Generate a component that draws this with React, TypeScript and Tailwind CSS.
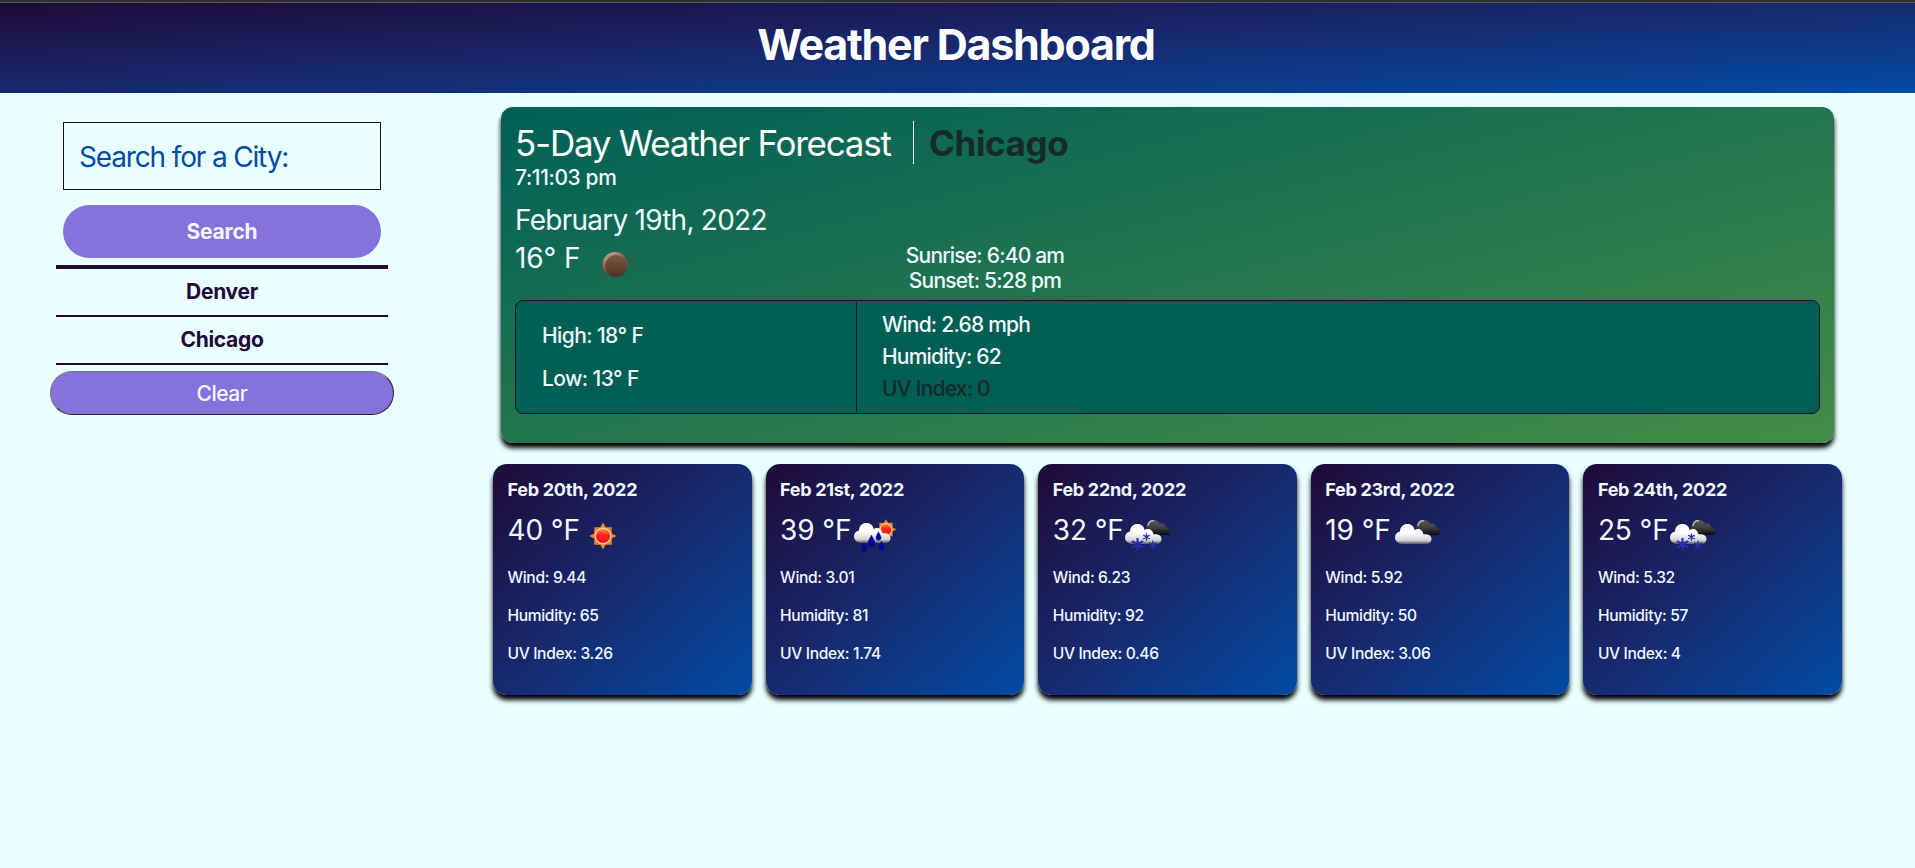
type Kind = "sun" | "rain" | "snow" | "cloud";

const days: { date: string; temp: string; kind: Kind; wind: string; humidity: string; uv: string }[] = [
  { date: "Feb 20th, 2022", temp: "40", kind: "sun", wind: "9.44", humidity: "65", uv: "3.26" },
  { date: "Feb 21st, 2022", temp: "39", kind: "rain", wind: "3.01", humidity: "81", uv: "1.74" },
  { date: "Feb 22nd, 2022", temp: "32", kind: "snow", wind: "6.23", humidity: "92", uv: "0.46" },
  { date: "Feb 23rd, 2022", temp: "19", kind: "cloud", wind: "5.92", humidity: "50", uv: "3.06" },
  { date: "Feb 24th, 2022", temp: "25", kind: "snow", wind: "5.32", humidity: "57", uv: "4" },
];

const iconMargin: Record<Kind, string> = {
  sun: "ml-[9px]",
  rain: "ml-[2px]",
  snow: "ml-0",
  cloud: "ml-[3px]",
};

const CLOUD = "M8 22 C3 22 0 19 0 15.5 C0 12 2 10 5 9.5 C5 4.5 8.500 2 12.500 2 C16.500 2 19 4.500 19.500 8 C23 5.500 28 7.500 28.500 12.500 C33.500 11.500 36.500 14 36.500 17 C36.500 20 34 22 31 22 Z";

function SunShape() {
  return (
    <g>
      <path
        d="M0 -14 L2.800 -9 L9 -9 L9 -2.800 L14 0 L9 2.800 L9 9 L2.800 9 L0 14 L-2.800 9 L-9 9 L-9 2.800 L-14 0 L-9 -2.800 L-9 -9 L-2.800 -9 Z"
        fill="#e8872a"
      />
      <circle r="8" fill="url(#sunCore)" stroke="#ffc9a0" strokeWidth="1.400" />
    </g>
  );
}

function Flake({ x, y, r }: { x: number; y: number; r: number }) {
  return (
    <g transform={`translate(${x} ${y}) scale(${r})`} stroke="#2531ac" strokeWidth="0.320" strokeLinecap="round">
      <path d="M0 -0.850 V0.850 M-0.750 -0.430 L0.750 0.430 M-0.750 0.430 L0.750 -0.430" />
      <circle r="0.400" fill="#2531ac" stroke="none" />
    </g>
  );
}

function Drop({ x, y, s }: { x: number; y: number; s: number }) {
  return (
    <path
      transform={`translate(${x} ${y}) scale(${s})`}
      d="M0 -5.500 C1 -3 3 -1 3 1.500 C3 3.500 1.600 4.500 0 4.500 C-1.600 4.500 -3 3.500 -3 1.500 C-3 -1 -1 -3 0 -5.500 Z"
      fill="#0606a8"
      stroke="#06064a"
      strokeWidth="0.500"
    />
  );
}

function WeatherIcon({ kind }: { kind: Kind }) {
  return (
    <svg className={`block h-[36px] w-[48px] shrink-0 ${iconMargin[kind]}`} viewBox="0 0 48 36">
      <defs>
        <linearGradient id="cloudFill" x1="0" y1="0" x2="0" y2="1">
          <stop offset="0.450" stopColor="#ffffff" />
          <stop offset="0.820" stopColor="#d2d2d6" />
          <stop offset="1" stopColor="#55565e" />
        </linearGradient>
        <linearGradient id="darkCloud" x1="0" y1="0" x2="0" y2="1">
          <stop offset="0" stopColor="#5a5a5c" />
          <stop offset="0.550" stopColor="#3c3c3e" />
          <stop offset="1" stopColor="#08080c" />
        </linearGradient>
        <linearGradient id="sunCore" x1="0" y1="0" x2="0" y2="1">
          <stop offset="0" stopColor="#ff9a38" />
          <stop offset="0.450" stopColor="#ff2418" />
          <stop offset="1" stopColor="#ff0a22" />
        </linearGradient>
      </defs>
      {kind === "sun" && (
        <g transform="translate(14 19) scale(0.970)">
          <SunShape />
        </g>
      )}
      {kind === "rain" && (
        <>
          <g transform="translate(33 12.500) scale(0.740)">
            <SunShape />
          </g>
          <path transform="translate(1 4)" d={CLOUD} fill="url(#cloudFill)" />
          <Drop x={11} y={30.500} s={0.9} />
          <Drop x={18.500} y={24.500} s={1.150} />
          <Drop x={25.500} y={19.500} s={0.850} />
          <Drop x={28.500} y={29} s={0.900} />
        </>
      )}
      {(kind === "snow" || kind === "cloud") && (
        <>
          <path d="M23 14 C21 7 24 2 29 2 C33 2 35.500 4 36 6 C38 4.500 41.500 5.500 42 9.500 C44 9 45.500 10.500 45.500 12.500 V17 H33 Z" transform="translate(0 1)" fill="url(#darkCloud)" />
          <path d="M24 9 C24.500 5 27 3.500 30 3.800" fill="none" stroke="#b9b9bb" strokeWidth="1.400" />
          <path transform="translate(1 5)" d={CLOUD} fill="url(#cloudFill)" />
        </>
      )}
      {kind === "snow" && (
        <>
          <Flake x={13.500} y={27.300} r={6.500} />
          <Flake x={22.500} y={20} r={3.800} />
          <Flake x={29} y={28} r={4.500} />
        </>
      )}
    </svg>
  );
}

function MoonIcon() {
  return (
    <svg className="block h-[28px] w-[36px]" viewBox="0 0 36 28">
      <defs>
        <linearGradient id="moonFill" x1="0" y1="0" x2="0" y2="1">
          <stop offset="0" stopColor="#7d5a43" />
          <stop offset="1" stopColor="#4d3023" />
        </linearGradient>
        <linearGradient id="moonRim" x1="0" y1="0" x2="0.500" y2="1">
          <stop offset="0" stopColor="#d9b8a6" />
          <stop offset="0.500" stopColor="#8a6249" />
          <stop offset="1" stopColor="#5b3826" />
        </linearGradient>
      </defs>
      <circle cx="14" cy="13.500" r="12.500" fill="url(#moonRim)" />
      <circle cx="15.200" cy="15" r="11" fill="url(#moonFill)" />
      <path d="M30 2 L31 4 L33 4.200 L31.500 5.600 L32 7.600 L30 6.600 L28 7.600 L28.500 5.600 L27 4.200 L29 4 Z M32 10 L32.800 11.800 L34.500 12 L33.200 13.200 L33.600 15 L32 14 L30.400 15 L30.800 13.200 L29.500 12 L31.200 11.800 Z" fill="#6b4a38" />
    </svg>
  );
}

export default function App() {
  return (
    <div className="h-[868px] w-[1915px] overflow-hidden bg-[#eaffff] font-['Inter',sans-serif] font-[450] text-[#f0f8ff]">
      <div className="h-[3px] border-b border-[#57585a] bg-[#2e2f31]" />
      <header className="flex h-[90px] justify-center bg-[linear-gradient(to_bottom_right,#1f0a38,#172a6f,#024ba4)]">
        <h1 className="h-[84px] pr-[3px] text-[43px] leading-[83px] font-bold tracking-[-1.25px] text-white">Weather Dashboard</h1>
      </header>
      <div className="flex">
        <aside className="flex w-[444px] flex-col items-center pt-[29px]">
          <div className="flex h-[68px] w-[318px] items-center border border-[#1f0a38] pt-[2px] pl-[15px] text-[28px] font-normal tracking-[-1.15px] text-[#024ba4]">Search for a City:</div>
          <button className="mt-[15px] h-[53px] w-[318px] rounded-[27px] bg-[#8573db] text-[21px] font-bold tracking-[-0.2px]">Search</button>
          <div className="mt-[7px] w-[332px] border-t-4 border-[#1f0a38] text-center text-[21px] font-bold tracking-[-0.3px] text-[#1f0a38]">
            <div className="h-[48px] border-b-2 border-[#1f0a38] leading-[46px]">Denver</div>
            <div className="h-[48px] border-b-2 border-[#1f0a38] leading-[46px]">Chicago</div>
          </div>
          <button className="mt-[6px] h-[44px] w-[344px] rounded-[22px] border border-t-[#767676] border-r-[#222222] border-b-[#222222] border-l-[#767676] bg-[#8573db] pt-[1px] text-[21px] tracking-[-0.5px]">Clear</button>
        </aside>
        <main className="w-[1471px] pt-[14px] pl-[49px]">
          <section className="ml-[8px] h-[336px] w-[1333px] rounded-[12px] bg-[linear-gradient(to_bottom_right,#005f56,#448c47)] px-[14px] pt-[14px] shadow-[0_5px_5px_#000000]">
            <div className="flex h-[43px] text-[35px] leading-[45px]">
              <h2 className="w-[398px] font-normal tracking-[-1.25px] whitespace-nowrap text-white">5-Day Weather Forecast</h2>
              <div className="border-l border-white pl-[15px] font-bold tracking-[-0.4px] text-[#17292a]">Chicago</div>
            </div>
            <div className="h-[29px] text-[21px] leading-[27px] tracking-[-0.4px]">7:11:03 pm</div>
            <div className="h-[50px] text-[28px] leading-[54px] font-normal tracking-[-0.75px]">February 19th, 2022</div>
            <div className="flex h-[57px]">
              <div className="w-[86px] text-[28px] leading-[30px] font-normal tracking-[-0.1px]">16° F</div>
              <div className="w-[290px] pt-[8px]"><MoonIcon /></div>
              <div className="w-[188px] text-center text-[21px] leading-[25px] tracking-[-0.8px] whitespace-nowrap">
                <div>Sunrise: 6:40 am</div>
                <div>Sunset: 5:28 pm</div>
              </div>
            </div>
            <div className="flex h-[114px] items-center rounded-[8px] border border-[#1f0a38] bg-[#005f53] text-[21px] tracking-[-0.6px]">
              <div className="h-[110px] w-[341px] border-r border-[#1f0a38] pt-[12px] pl-[26px] leading-[43px]">
                <div>High: 18° F</div>
                <div>Low: 13° F</div>
              </div>
              <div className="pl-[25px] leading-[32px] tracking-[-0.78px]">
                <div>Wind: 2.68 mph</div>
                <div>Humidity: 62</div>
                <div className="text-[#17292a]">UV Index: 0</div>
              </div>
            </div>
          </section>
          <div className="mt-[21px] grid w-[1349px] grid-cols-5 gap-[14px]">
            {days.map((d) => (
              <article key={d.date} className="h-[231px] rounded-[14px] bg-[linear-gradient(to_bottom_right,#1f0a38,#172a6f,#024ba4)] px-[14.500px] pt-[14px] text-[15.600px] shadow-[0_5px_5px_#000000]">
                <h3 className="h-[24px] text-[18px] leading-[24px] font-bold tracking-[-0.3px]">{d.date}</h3>
                <div className="flex h-[57px] pt-[15px] text-[28px] leading-[26px] font-normal tracking-[-0.1px]">
                  <span>{d.temp} °F</span>
                  <WeatherIcon kind={d.kind} />
                </div>
                <div className="leading-[38px] tracking-[-0.35px]">
                  <p>Wind: {d.wind}</p>
                  <p>Humidity: {d.humidity}</p>
                  <p>UV Index: {d.uv}</p>
                </div>
              </article>
            ))}
          </div>
        </main>
      </div>
    </div>
  );
}
